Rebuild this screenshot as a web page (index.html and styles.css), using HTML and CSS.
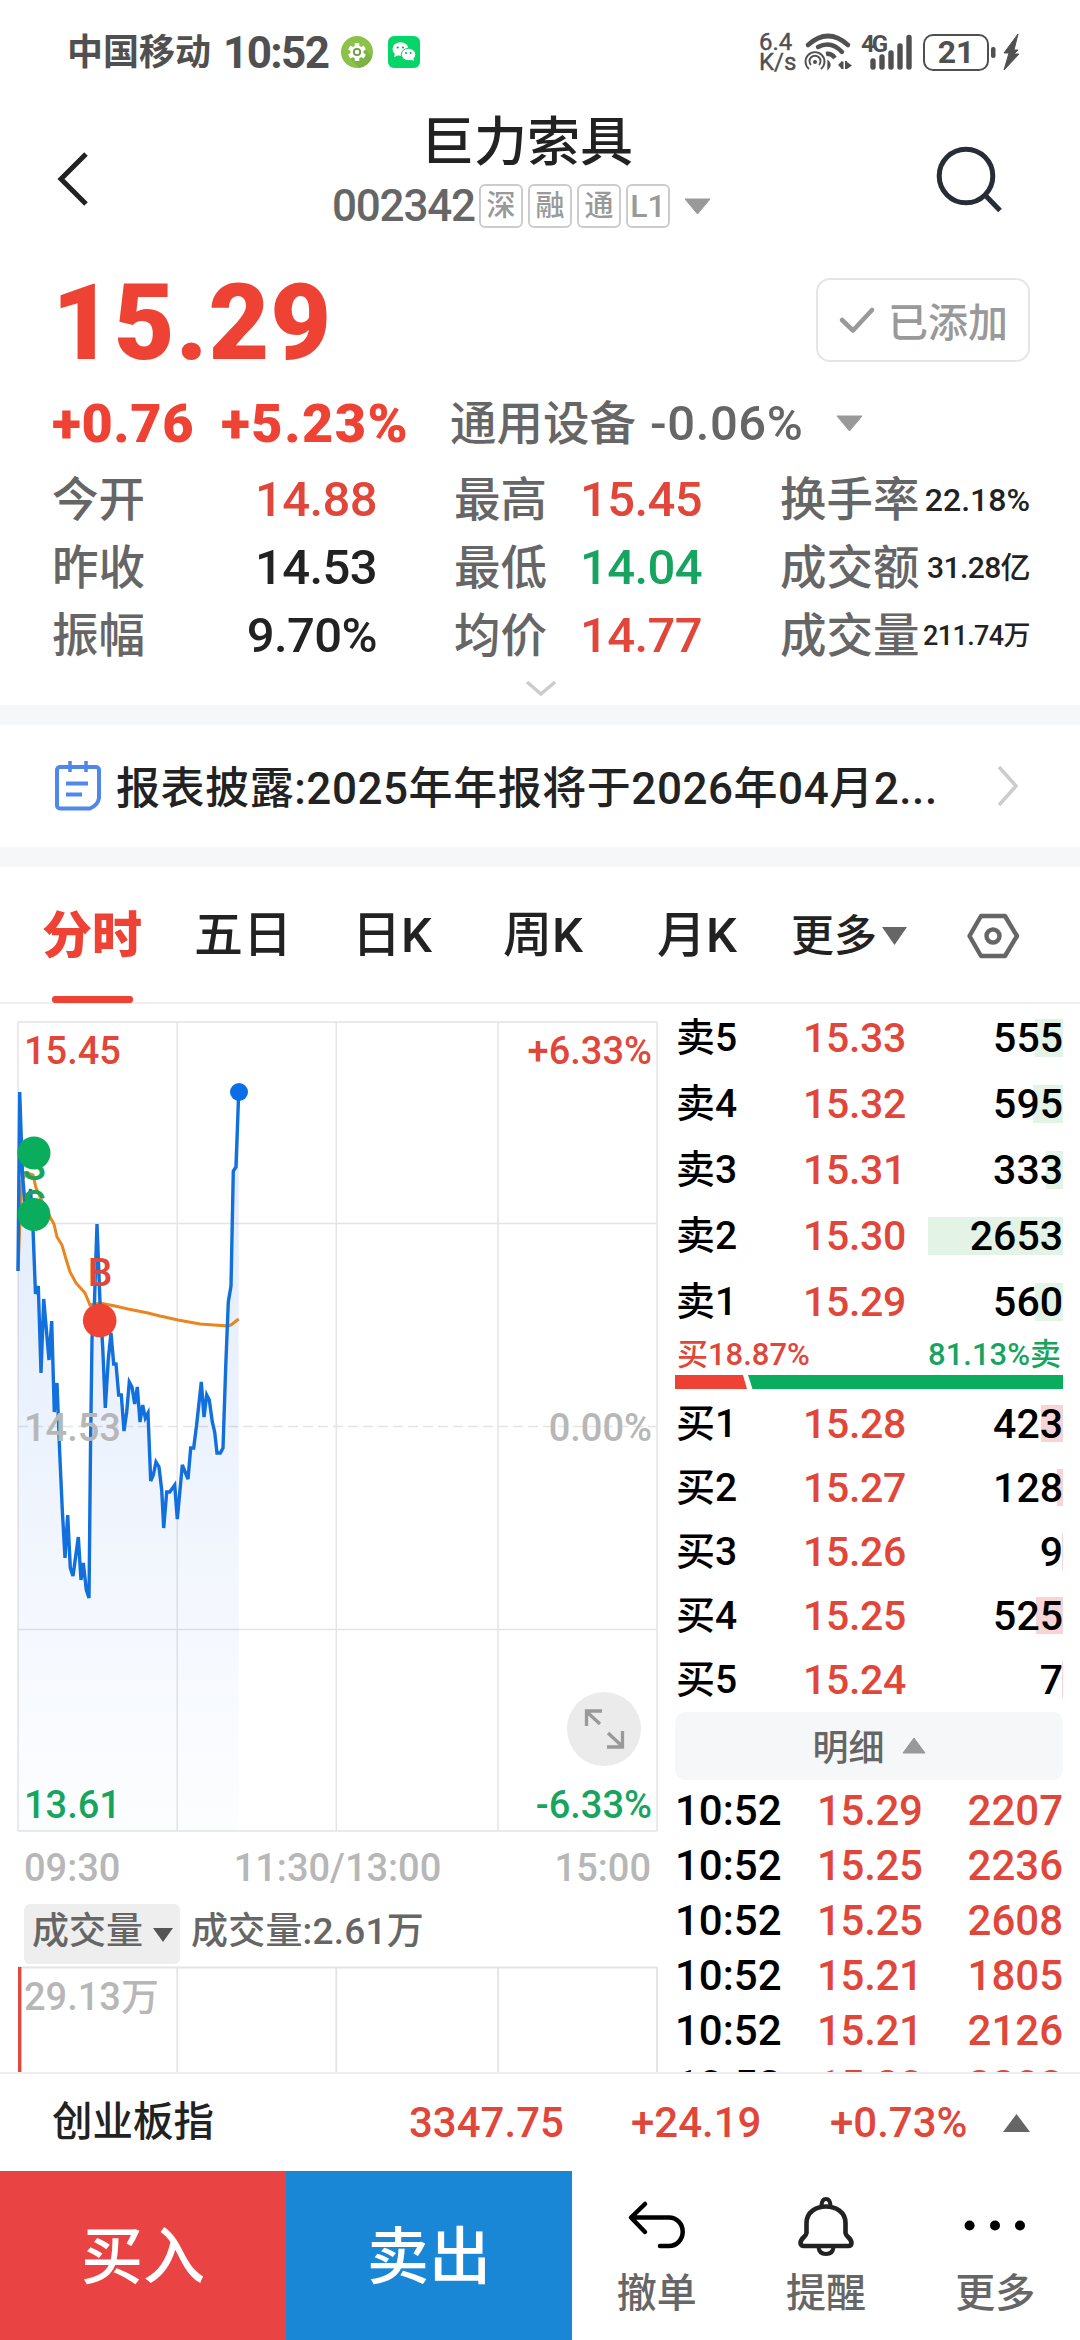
FILE: index.html
```html
<!DOCTYPE html>
<html lang="zh-CN">
<head>
<meta charset="UTF-8">
<title>巨力索具 002342</title>
<link rel="stylesheet" href="styles.css">
</head>
<body>
<div class="page">

<div class="status">
  <span class="carrier">中国移动</span>
  <span class="clock">10:52</span>
  <svg class="app1" width="32" height="32" viewBox="0 0 32 32">
    <circle cx="16" cy="16" r="16" fill="#8bc34a"/>
    <path d="M10 23 L18 31.8 A16 16 0 0 0 31 21 L23 12z" fill="#7cb342"/>
    <circle cx="16" cy="16" r="6.6" fill="#fff"/>
    <path d="M16 7v18M8.2 11.5l15.6 9M8.2 20.5l15.6-9" stroke="#fff" stroke-width="4.4"/>
    <circle cx="16" cy="16" r="3.2" fill="#fff" stroke="#6f9a3a" stroke-width="1.8"/>
  </svg>
  <svg width="32" height="32" viewBox="0 0 32 32">
    <rect width="32" height="32" rx="6" fill="#06d66a"/>
    <ellipse cx="12.5" cy="13" rx="8" ry="6.8" fill="#fff"/><path d="M7 17l-1 4 5-2z" fill="#fff"/>
    <ellipse cx="20.5" cy="18.5" rx="7.2" ry="6.2" fill="#fff" stroke="#06d66a" stroke-width="1"/><path d="M22 23l4 2-1-4z" fill="#fff"/>
    <g fill="#06a855"><circle cx="9.7" cy="11.5" r="1.1"/><circle cx="15" cy="11.5" r="1.1"/><circle cx="18" cy="17" r="1"/><circle cx="22.6" cy="17" r="1"/></g>
  </svg>
  <span class="speed">6.4<br>K/s</span>
  <svg class="wifi" width="48" height="38" viewBox="0 0 48 38" fill="none" stroke="#505050">
    <path d="M4 12 Q24-6 44 12" stroke-width="4.6" stroke-linecap="round"/>
    <path d="M14 14 Q27 7 38 19" stroke-width="4.4" stroke-linecap="round"/>
    <path d="M22 21 Q27 20 31 25" stroke-width="4.4"/>
    <path d="M5 36 A9.5 9.5 0 1 1 17 36" stroke-width="1.9"/>
    <path d="M7 32 A5.5 5.5 0 1 1 15 32" stroke-width="1.9"/>
    <circle cx="11" cy="29" r="2" fill="#505050" stroke="none"/>
    <path d="M24 28q4 4 0 8z" fill="#505050" stroke-width="1.3"/>
    <path d="M34 32l4-4v8zM37 28.500h2.500v7.500H37zM41 28h2v8h-2zM43 29l5 3.500-5 3.500z" fill="#505050" stroke="none"/>
  </svg>
  <svg class="signal" width="54" height="38" viewBox="0 0 54 38">
    <text x="0" y="19" class="net">4G</text>
    <path d="M12 28v6M21 24v10M30 20v14M39 13v21M48 4.500v29.500" stroke="#505050" stroke-width="5.400" stroke-linecap="round"/>
  </svg>
  <div class="battery">21</div>
  <svg width="32" height="38" viewBox="0 0 32 38">
    <rect x="1" y="14" width="4.500" height="11" rx="2" fill="#505050"/>
    <path d="M28 1 L14 20 H19 L14 37 L29 21 H24 L28 17 H24z" fill="#505050" stroke="#505050" stroke-linejoin="round"/>
  </svg>
</div>

<div class="header">
  <svg class="back" width="36" height="60" viewBox="0 0 36 60"><path d="M31 5 L6 30 L31 55" fill="none" stroke="#222" stroke-width="5"/></svg>
  <div class="heading">
    <div class="name">巨力索具</div>
    <div class="code">
      <span class="num">002342</span>
      <i class="tag">深</i><i class="tag">融</i><i class="tag">通</i><i class="tag l1">L1</i>
      <svg class="tri" width="27" height="17" viewBox="0 0 27 17"><path d="M1 1h25L13.500 16z" fill="#999" stroke="#999" stroke-linejoin="round"/></svg>
    </div>
  </div>
  <svg class="search" width="70" height="70" viewBox="0 0 70 70"><g fill="none" stroke="#282c37" stroke-width="5"><circle cx="31" cy="31" r="26.800"/><path d="M50 50 L65 65.500"/></g></svg>
</div>

<div class="quote">
  <div class="top">
    <div class="price">15.29</div>
    <div class="added">
      <svg width="36" height="28" viewBox="0 0 36 28"><path d="M3 14 L14 24.500 L33 4" fill="none" stroke="#999" stroke-width="4.500" stroke-linecap="round" stroke-linejoin="round"/></svg>
      已添加
    </div>
  </div>
  <div class="change">
    <b class="amt">+0.76</b><b class="pct">+5.23%</b>
    <span class="sector">通用设备</span><span class="sectorpct">-0.06%</span>
    <svg width="27" height="17" viewBox="0 0 27 17"><path d="M1 1h25L13.500 16z" fill="#999" stroke="#999" stroke-linejoin="round"/></svg>
  </div>
  <div class="grid">
    <span>今开</span><em class="red">14.88</em><span class="c2">最高</span><em class="red">15.45</em><span class="c3">换手率</span><em class="s1">22.18%</em>
    <span>昨收</span><em>14.53</em><span class="c2">最低</span><em class="green">14.04</em><span class="c3">成交额</span><em class="s2">31.28亿</em>
    <span>振幅</span><em>9.70%</em><span class="c2">均价</span><em class="red">14.77</em><span class="c3">成交量</span><em class="s3">211.74万</em>
  </div>
  <svg class="expand" width="32" height="18" viewBox="0 0 32 18"><path d="M2 2 L16 14 L30 2" fill="none" stroke="#ccc" stroke-width="3.500"/></svg>
</div>

<div class="news">
  <svg width="48" height="52" viewBox="0 0 48 52" fill="none" stroke="#4f87ea" stroke-width="4">
    <path d="M6 7 H42 a3 3 0 0 1 3 3 V38 Q44 45 36 48.500 H6 a3 3 0 0 1 -3 -3 V10 a3 3 0 0 1 3 -3z"/>
    <path d="M16 1v11M32 1v11" stroke-width="3.500"/><path d="M12 23.500h22M12 34.500h16"/>
  </svg>
  <span class="newstext">报表披露:2025年年报将于2026年04月2...</span>
  <svg class="go" width="24" height="44" viewBox="0 0 24 44"><path d="M3 3 L20 22 L3 41" fill="none" stroke="#ccc" stroke-width="3.500"/></svg>
</div>

<div class="tabs">
  <span class="tab on">分时</span><span class="tab">五日</span><span class="tab">日K</span><span class="tab">周K</span><span class="tab">月K</span>
  <span class="tab more">更多<svg width="27" height="18" viewBox="0 0 27 18"><path d="M1 0h25L13.500 18z" fill="#666"/></svg></span>
  <svg class="gear" width="54" height="48" viewBox="0 0 54 48" fill="none" stroke="#666" stroke-width="4.400"><path d="M15 4 H39 L51 24 L39 44 H15 L3.500 24z" stroke-linejoin="round"/><circle cx="27" cy="24" r="6.500"/></svg>
</div>

<div class="main">
  <div class="left">
    <svg class="chart" width="664" height="829" viewBox="0 1004 664 829">
      <defs><linearGradient id="area" x1="0" y1="0" x2="0" y2="1"><stop offset="0" stop-color="#0c5ee6" stop-opacity=".13"/><stop offset="1" stop-color="#0c5ee6" stop-opacity=".01"/></linearGradient></defs>
      <g stroke="#e4e4e4" stroke-width="1.500" fill="none">
        <path d="M18 1022H657M18 1223.500H657M18 1629.500H657M18 1831H657M18 1022V1831M177.300 1022V1831M336.300 1022V1831M498 1022V1831M657 1022V1831"/>
        <path d="M18 1426.500H657" stroke-dasharray="10 5"/>
      </g>
      <path fill="url(#area)" d="M18 1831 L18 1271 19.700 1092 25 1204 30.500 1189 33 1229 35.500 1294 38.300 1286 41 1373 43.700 1299 49 1360 51.700 1321 54.300 1412 57 1383 62.300 1510 65 1558 67.700 1515 73 1576 78.300 1537 81 1580 89 1598 92 1339 97 1224 105.300 1408 111 1333 118.700 1395 124 1431 129.300 1382 134.700 1404 137.300 1387 140 1422 148 1413 150.700 1481 156 1462 159 1467 163.700 1528 166.700 1492 174.700 1485 177.300 1519 182.300 1465 188 1479 190.700 1448 196.700 1424 201.300 1382 204 1417 206.700 1395 217 1453 223 1448 228.300 1302 231 1286 233.300 1171 238.700 1092 V1831z"/>
      <polyline class="avg" points="18,1271 20,1220 22,1180 27,1173 33,1175 36,1188 42,1201 50,1217 54,1224 57,1237 62,1245 66,1259 70,1272 76,1283 85,1293 90,1305 100,1303 115,1306 128,1309 148,1313 160,1316 178,1320 200,1324 228,1326 231,1325 238.700,1319"/>
      <polyline class="line" points="18,1271 19.700,1092 22.500,1175 25,1204 28,1212 30.500,1189 33,1229 35.500,1294 38.300,1286 41,1373 43.700,1299 49,1360 51.700,1321 54.300,1412 57,1383 59.700,1453 62.300,1510 65,1558 67.700,1515 70.300,1568 73,1576 78.300,1537 81,1580 83.300,1563 86.300,1590 89,1598 90.500,1449 92,1339 94.300,1306 97,1224 100,1302 102.700,1347 105.300,1408 108.300,1359 111,1333 113.700,1364 116,1364 118.700,1395 121.300,1395 124,1431 126.700,1412 129.300,1382 132,1387 134.700,1404 137.300,1387 140,1422 142.700,1405 145.300,1418 148,1413 150.700,1481 153.300,1475 156,1462 159,1467 161.700,1490 163.700,1528 166.700,1492 169.700,1492 174.700,1485 177.300,1519 182.300,1465 188,1479 190.700,1448 193.700,1448 196.700,1424 201.300,1382 204,1417 206.700,1395 209.300,1400 212.300,1422 214.700,1432 217,1453 220.300,1453 223,1448 225.700,1367 228.300,1302 231,1286 233.300,1171 236,1167 238.700,1092"/>
      <circle cx="239" cy="1092" r="9" fill="#0c6ee6"/>
      <g class="mark green"><text x="34" y="1180">S</text><text x="34" y="1218">S</text></g>
      <g fill="#0aad5c"><circle cx="34" cy="1153" r="16.500"/><circle cx="34" cy="1214.500" r="16.500"/></g>
      <text class="mark red" x="100" y="1286">B</text>
      <circle cx="99.700" cy="1320.500" r="16.800" fill="#ee4334"/>
      <g class="lab">
        <text class="red" x="24" y="1064">15.45</text><text class="red r" x="652" y="1064">+6.33%</text>
        <text class="gray" x="24" y="1441">14.53</text><text class="gray r" x="652" y="1441">0.00%</text>
        <text class="green" x="24" y="1818">13.61</text><text class="green r" x="652" y="1818">-6.33%</text>
      </g>
      <circle cx="604" cy="1729" r="37" fill="#ebebeb"/>
      <path d="M602 1711H586.500V1726M587 1712L600 1724M607 1747H622.500V1731M622 1746L608 1733" fill="none" stroke="#999" stroke-width="3.300"/>
    </svg>
    <div class="times"><span>09:30</span><span>11:30/13:00</span><span>15:00</span></div>
    <div class="volhead">
      <span class="pick">成交量<svg width="20" height="14" viewBox="0 0 20 14"><path d="M0 0h20L10 14z" fill="#555"/></svg></span>
      <span class="volnow">成交量:2.61万</span>
    </div>
    <svg class="vol" width="664" height="106" viewBox="0 1966 664 106">
      <path d="M18 1967.500H657M177.300 1967V2072M336.300 1967V2072M498 1967V2072M657 1967V2072" stroke="#e4e4e4" stroke-width="1.800"/>
      <path d="M19.700 1967V2072" stroke="#dd4a3f" stroke-width="3.500"/>
      <text class="lab gray" x="24" y="2010">29.13万</text>
    </svg>
  </div>

  <div class="right">
    <div class="book sell">
      <div class="row"><span>卖5</span><em>15.33</em><b>555</b><i style="width:28px"></i></div>
      <div class="row"><span>卖4</span><em>15.32</em><b>595</b><i style="width:30px"></i></div>
      <div class="row"><span>卖3</span><em>15.31</em><b>333</b><i style="width:17px"></i></div>
      <div class="row"><span>卖2</span><em>15.30</em><b>2653</b><i style="width:135px"></i></div>
      <div class="row"><span>卖1</span><em>15.29</em><b>560</b><i style="width:28px"></i></div>
    </div>
    <div class="ratio"><span class="red">买18.87%</span><span class="green">81.13%卖</span></div>
    <svg class="ratiobar" width="388" height="14" viewBox="0 0 388 14"><path d="M0 0H68L72 14H0z" fill="#ee4334"/><path d="M73 0H388V14H77.500z" fill="#0aad5c"/></svg>
    <div class="book buy">
      <div class="row"><span>买1</span><em>15.28</em><b>423</b><i style="width:22px"></i></div>
      <div class="row"><span>买2</span><em>15.27</em><b>128</b><i style="width:6px"></i></div>
      <div class="row"><span>买3</span><em>15.26</em><b>9</b><i style="width:1px"></i></div>
      <div class="row"><span>买4</span><em>15.25</em><b>525</b><i style="width:27px"></i></div>
      <div class="row"><span>买5</span><em>15.24</em><b>7</b><i style="width:1px"></i></div>
    </div>
    <div class="detail">明细<svg width="24" height="17" viewBox="0 0 24 17"><path d="M12 1L23 16H1z" fill="#999" stroke="#999" stroke-linejoin="round"/></svg></div>
    <div class="ticks">
      <div><span>10:52</span><em>15.29</em><b>2207</b></div>
      <div><span>10:52</span><em>15.25</em><b>2236</b></div>
      <div><span>10:52</span><em>15.25</em><b>2608</b></div>
      <div><span>10:52</span><em>15.21</em><b>1805</b></div>
      <div><span>10:52</span><em>15.21</em><b>2126</b></div>
      <div><span>10:52</span><em>15.20</em><b>2208</b></div>
    </div>
  </div>
</div>

<div class="index">
  <span class="iname">创业板指</span><span class="i1">3347.75</span><span class="i2">+24.19</span><span class="i3">+0.73%</span>
  <svg width="27" height="18" viewBox="0 0 27 18"><path d="M13.500 0L27 18H0z" fill="#666"/></svg>
</div>

<div class="footer">
  <div class="btn buybtn">买入</div>
  <div class="btn sellbtn">卖出</div>
  <div class="act">
    <svg width="60" height="60" viewBox="0 0 60 60" fill="none" stroke="#000" stroke-width="4.500" stroke-linecap="round" stroke-linejoin="round"><path d="M18 8L4 21.500L18 36M5 21.500H42A13 13.500 0 0 1 42 50H33"/></svg>
    <span>撤单</span>
  </div>
  <div class="act">
    <svg width="60" height="60" viewBox="0 0 60 60" fill="none" stroke="#222" stroke-width="4.600" stroke-linejoin="round"><path d="M10.500 37V27C10.500 5 49.500 5 49.500 27V37C50 41 55.500 42 55.500 47Q55.500 50 52 50H8Q4.500 50 4.500 47C4.500 42 10 41 10.500 37z"/><path d="M25.500 9.500Q26 3 30 3T34.500 9.500M22.500 51Q23 58 30 58T37.500 51" stroke-width="4"/></svg>
    <span>提醒</span>
  </div>
  <div class="act">
    <svg width="60" height="60" viewBox="0 0 60 60"><circle cx="4.600" cy="29.500" r="5"/><circle cx="30" cy="29.500" r="5"/><circle cx="55" cy="29.500" r="5"/></svg>
    <span>更多</span>
  </div>
</div>

</div>
</body>
</html>
```
FILE: styles.css
```css
* { box-sizing: border-box; }

body {
    margin: 0;
    background: #fff;
    color: #222;
    font-family: Roboto, "Noto Sans CJK SC", sans-serif;
    font-weight: 500;
}

.page {
    width: 1080px;
    height: 2340px;
    overflow: hidden;
    display: flex;
    flex-direction: column;
    background: #fff;
}

svg { display: block; flex: none; overflow: visible; }
em, i { font-style: normal; }
.red { color: #e0473a; fill: #e0473a; }
.green { color: #16a45f; fill: #16a45f; }
.gray { fill: #b7b7b7; }

/* status bar */
.status {
    height: 104px;
    padding: 0 58px 0 67px;
    display: flex;
    align-items: center;
    color: #505050;
    line-height: 40px;
}
.carrier { font-size: 36px; font-weight: 700; width: 156px; padding-top: 2px; }
.clock { font-size: 44px; font-weight: 700; letter-spacing: -1.6px; width: 118px; padding-top: 2px; }
.app1 { margin-right: 15px; }
.speed { margin-left: auto; width: 45px; font-size: 24px; line-height: 20px; font-weight: 400; -webkit-text-stroke: .4px #505050; }
.wifi { margin-right: 9px; }
.signal { margin-right: 8px; }
.net { font-size: 24px; font-weight: 700; fill: #505050; letter-spacing: -3px; }
.battery {
    width: 66px;
    height: 37px;
    margin-right: 1px;
    border: 2.5px solid #505050;
    border-radius: 10px;
    font-size: 32px;
    font-weight: 700;
    line-height: 33px;
    text-align: center;
}

/* header */
.header {
    height: 144px;
    padding: 0 75px 0 55px;
    display: flex;
    justify-content: space-between;
}
.back { margin-top: 45px; }
.search { margin-top: 41px; }
.heading { padding-left: 17px; }
.name { margin-top: 7px; font-size: 53px; line-height: 64px; text-align: center; padding-left: 11px; }
.code { display: flex; align-items: center; height: 52px; margin-top: 5px; color: #666; }
.num { font-size: 44px; letter-spacing: -1.2px; width: 147px; }
.tag {
    width: 44px;
    height: 44px;
    margin-right: 5px;
    border: 2px solid #ccc;
    border-radius: 6px;
    color: #999;
    font-size: 29px;
    line-height: 41px;
    text-align: center;
}
.l1 { font-size: 32px; }
.tri { margin-left: 9px; }

/* quote */
.quote { height: 457px; padding: 0 50px 0 52px; }
.top { height: 128px; display: flex; justify-content: space-between; align-items: flex-start; padding-top: 30px; }
.price { font-size: 105px; font-weight: 900; line-height: 92px; letter-spacing: 1px; color: #ee4334; }
.added {
    width: 214px;
    height: 84px;
    border: 2px solid #e5e5e5;
    border-radius: 14px;
    display: flex;
    align-items: center;
    padding-left: 21px;
    gap: 13px;
    font-size: 40px;
    color: #999;
}
.change { height: 90px; padding-top: 5px; display: flex; align-items: center; line-height: 56px; color: #666; }
.change b { font-size: 54px; font-weight: 900; letter-spacing: .6px; color: #ee4334; }
.change b.pct { letter-spacing: 1.5px; }
.amt { width: 169px; }
.pct { width: 229px; }
.sector { font-size: 46.5px; width: 200px; }
.sectorpct { font-size: 49px; width: 186px; letter-spacing: .6px; white-space: nowrap; }
.grid {
    display: grid;
    grid-template-columns: 120px 205px 174px 151px 216px 1fr;
    grid-auto-rows: 68px;
    line-height: 68px;
    font-size: 46.5px;
    color: #666;
    white-space: nowrap;
}
.grid em { color: #222; text-align: right; font-size: 49px; letter-spacing: -.6px; }
.grid em.red { color: #e0473a; }
.grid em.green { color: #16a45f; }
.grid .c2 { padding-left: 77px; }
.grid .c3 { padding-left: 78px; }
.grid .s1 { font-size: 32px; letter-spacing: 0; }
.grid .s2 { font-size: 30px; }
.grid .s3 { font-size: 27px; }
.expand { margin: 10px auto 0; }

/* notice */
.news {
    height: 162px;
    border-top: 20px solid #f6f7f9;
    border-bottom: 20px solid #f6f7f9;
    display: flex;
    align-items: center;
    padding: 0 60px 0 54px;
}
.newstext { margin-left: 14px; padding-bottom: 3px; font-size: 44px; letter-spacing: .55px; white-space: nowrap; }
.go { margin-left: auto; }

/* tabs */
.tabs {
    height: 137px;
    border-bottom: 2px solid #eee;
    display: grid;
    grid-template-columns: 152px 158px 151px 154px 134px 174px 1fr;
    padding-left: 42px;
    font-size: 49px;
    line-height: 138px;
}
.tab { position: relative; }
.on { font-weight: 900; font-size: 50px; color: #ee4334; }
.on::after {
    content: "";
    position: absolute;
    left: 10px;
    bottom: 2px;
    width: 81px;
    height: 7px;
    border-radius: 3px;
    background: #ee4334;
}
.more { display: flex; align-items: center; font-size: 43px; }
.more svg { margin-left: 4px; }
.gear { align-self: center; margin-left: 1px; }

/* chart side */
.main { height: 1068px; display: flex; overflow: hidden; }
.left { width: 675px; }
.line { fill: none; stroke: #1270dc; stroke-width: 3.4; }
.avg { fill: none; stroke: #e8861f; stroke-width: 3; }
.lab { font-size: 38px; }
.r { text-anchor: end; }
.mark { font-size: 39px; text-anchor: middle; }
.times {
    height: 70px;
    padding: 0 24px;
    display: flex;
    justify-content: space-between;
    line-height: 70px;
    font-size: 38px;
    color: #b7b7b7;
}
.volhead { height: 61px; margin-bottom: 2px; padding-left: 24px; display: flex; align-items: center; gap: 11px; font-size: 37px; line-height: 54px; color: #666; }
.volnow { padding-bottom: 3px; letter-spacing: .2px; }
.pick {
    width: 156px;
    height: 60px;
    padding: 0 0 3px 8px;
    border-radius: 6px;
    background: #eee;
    display: flex;
    align-items: center;
    gap: 10px;
}
.pick svg { margin-top: 5px; }

/* order book */
.right { width: 388px; color: #000; }
.row {
    position: relative;
    display: grid;
    grid-template-columns: 128px 120px 1fr;
    height: 66px;
    line-height: 68px;
    font-size: 41px;
}
.row span { font-size: 39px; padding-left: 1px; }
.row em, .ticks em { color: #e0473a; letter-spacing: -.3px; }
.row b { font-weight: 500; text-align: right; z-index: 1; }
.row i { position: absolute; right: 0; top: 15px; height: 38px; background: #e3f3e5; }
.buy .row { height: 64px; line-height: 66px; }
.buy .row i { top: 14px; height: 37px; background: #f8d4d4; }
.ratio { height: 40px; padding: 0 2px; display: flex; justify-content: space-between; font-size: 31px; line-height: 42px; }
.ratiobar { margin: 1px 0 2px; }
.detail {
    height: 68px;
    margin-top: 1px;
    padding-bottom: 2px;
    border-radius: 10px;
    background: #f6f7f9;
    color: #666;
    font-size: 36px;
    display: flex;
    align-items: center;
    justify-content: center;
    gap: 17px;
}
.ticks { margin-top: 3px; font-size: 42px; line-height: 55px; }
.ticks div { display: grid; grid-template-columns: 142px 130px 1fr; }
.ticks b { font-weight: 500; text-align: right; color: #e0473a; }

/* index strip */
.index {
    height: 99px;
    border-top: 2px solid #eee;
    display: flex;
    align-items: center;
    padding-left: 52px;
    font-size: 42px;
    line-height: 60px;
    color: #e0473a;
}
.iname { color: #222; font-size: 40.5px; width: 357px; padding-bottom: 2px; }
.i1 { width: 222px; }
.i2 { width: 199px; }
.i3 { width: 173px; }

/* bottom bar */
.footer { height: 169px; display: flex; }
.btn { width: 286px; color: #fff; font-size: 62px; line-height: 174px; text-align: center; }
.buybtn { background: #ea4343; }
.sellbtn { background: #1a86d6; }
.act { flex: 1; display: flex; flex-direction: column; align-items: center; padding-top: 25px; color: #666; font-size: 40px; line-height: 56px; }
.act span { margin-top: 10px; }
```
